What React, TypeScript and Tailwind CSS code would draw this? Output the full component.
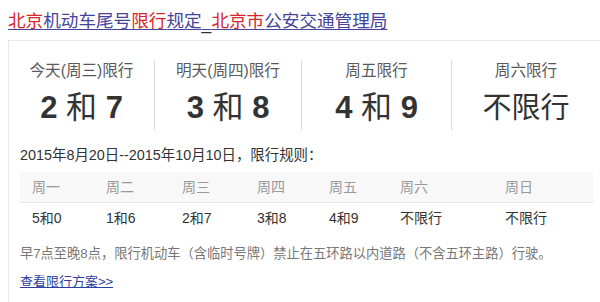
import React from "react";

const FONT = { fontFamily: '"Liberation Sans", Arial, "Noto Sans CJK SC", sans-serif' };

export default function App() {
  const tops = [
    { label: "今天(周三)限行", a: "2", b: "7" },
    { label: "明天(周四)限行", a: "3", b: "8" },
    { label: "周五限行", a: "4", b: "9" },
    { label: "周六限行", none: true },
  ];
  const heads = ["周一", "周二", "周三", "周四", "周五", "周六", "周日"];
  const vals = ["5和0", "1和6", "2和7", "3和8", "4和9", "不限行", "不限行"];
  return (
    <div className="w-[600px] h-[302px] overflow-hidden bg-white" style={FONT}>
      <div className="h-[40px] pt-[9px] pl-2 text-[17.6px] leading-[24px]">
        <a href="#" className="underline decoration-1 underline-offset-[2px] text-[#44449a]">
          <span className="text-[#d9252a]">北京</span>机动车尾号<span className="text-[#d9252a]">限行</span>规定<span className="text-[#333] relative top-[2px]">_</span><span className="text-[#d9252a]">北京市</span>公安交通管理局
        </a>
      </div>
      <div className="ml-2 border-l border-t border-[#e8e8e8] h-[262px]">
        <div className="grid grid-cols-[146px_147px_150px_1fr] mt-[19px]">
          {tops.map((t, i) => (
            <div
              key={i}
              className={
                "flex flex-col items-center h-[70px] " + (i < 3 ? "border-r border-[#dcdcdc]" : "")
              }
            >
              <div className="text-[15.6px] leading-[22px] text-[#5a5a5a]">{t.label}</div>
              <div className="mt-[6px] h-[40px] leading-[40px] text-[#333]">
                {t.none ? (
                  <span className="text-[29px]">不限行</span>
                ) : (
                  <span className="text-[31px] font-bold">
                    {t.a} <span className="font-normal">和</span> {t.b}
                  </span>
                )}
              </div>
            </div>
          ))}
        </div>
        <div className="pl-[11px] pr-[7px]">
          <div className="mt-[15px] text-[14.4px] leading-[20px] text-[#333]">
            2015年8月20日--2015年10月10日，限行规则：
          </div>
          <div className="mt-[7px] grid grid-cols-[74px_76px_75px_72px_71px_105px_1fr] h-[31px] bg-[#f8f8f8] border-b border-[#e6e6e6] items-center text-[14px] text-[#999]">
            {heads.map((h) => (
              <div key={h} className="pl-3">{h}</div>
            ))}
          </div>
          <div className="grid grid-cols-[74px_76px_75px_72px_71px_105px_1fr] h-[30px] items-center text-[14px] text-[#333]">
            {vals.map((v, i) => (
              <div key={i} className="pl-3">{v}</div>
            ))}
          </div>
          <div className="mt-[11px] text-[13.25px] leading-[20px] text-[#777]">
            早7点至晚8点，限行机动车（含临时号牌）禁止在五环路以内道路（不含五环主路）行驶。
          </div>
          <div className="mt-[8px] text-[13px] leading-[20px]">
            <a href="#" className="underline text-[#2d3fa0]">查看限行方案&gt;&gt;</a>
          </div>
        </div>
      </div>
    </div>
  );
}
